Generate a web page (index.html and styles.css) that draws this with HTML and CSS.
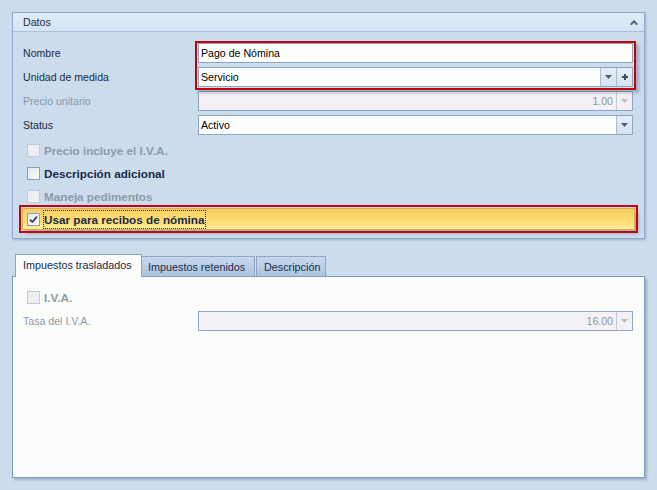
FILE: index.html
```
<!DOCTYPE html>
<html lang="es">
<head>
<meta charset="utf-8">
<title>Datos</title>
<link rel="stylesheet" href="styles.css">
</head>
<body>
<div class="page">
  <section class="group">
    <div class="group-head">
      <span class="group-title">Datos</span>
      <svg class="chev" width="8" height="5" viewBox="0 0 8 5"><path d="M0.8 4.6 L4 1.4 L7.2 4.6" stroke="#4a5d7c" stroke-width="2" fill="none"/></svg>
    </div>
    <div class="group-body">
      <div class="form">
        <div class="lbl">Nombre</div>
        <div class="pair">
          <div class="field"><span class="val">Pago de Nómina</span></div>
          <div class="field">
            <span class="val">Servicio</span>
            <span class="btn"><svg width="7" height="4" viewBox="0 0 7 4"><path d="M0 0h7L3.5 4z" fill="#4d5c72"/></svg></span>
            <span class="btn"><svg width="6" height="6" viewBox="0 0 6 6"><path d="M2 0h2v2h2v2H4v2H2V4H0V2h2z" fill="#3c4c66"/></svg></span>
          </div>
        </div>
        <div class="lbl">Unidad de medida</div>
        <div class="lbl dis">Precio unitario</div>
        <div class="field dis">
          <span class="val right">1.00</span>
          <span class="btn"><svg width="7" height="4" viewBox="0 0 7 4"><path d="M0 0h7L3.5 4z" fill="#b9bec6"/></svg></span>
        </div>
        <div class="lbl">Status</div>
        <div class="field">
          <span class="val">Activo</span>
          <span class="btn"><svg width="7" height="4" viewBox="0 0 7 4"><path d="M0 0h7L3.5 4z" fill="#4d5c72"/></svg></span>
        </div>
      </div>
      <div class="checks">
        <div class="chk dis"><span class="box"></span><span class="ctext">Precio incluye el I.V.A.</span></div>
        <div class="chk"><span class="box"></span><span class="ctext">Descripción adicional</span></div>
        <div class="chk dis"><span class="box"></span><span class="ctext">Maneja pedimentos</span></div>
        <div class="chk hl">
          <span class="box"><svg width="11" height="11" viewBox="0 0 11 11"><path d="M2 5.6 L4.4 8 L9 2.6" stroke="#2b4070" stroke-width="1.8" fill="none"/></svg></span>
          <span class="ctext focus">Usar para recibos de nómina</span>
        </div>
      </div>
    </div>
  </section>

  <div class="tabs">
    <div class="tab active">Impuestos trasladados</div>
    <div class="tab t2">Impuestos retenidos</div>
    <div class="tab t3">Descripción</div>
  </div>
  <div class="panel">
    <div class="chk dis solo"><span class="box"></span><span class="ctext">I.V.A.</span></div>
    <div class="form single">
      <div class="lbl dis">Tasa del I.V.A.</div>
      <div class="field dis">
        <span class="val right">16.00</span>
        <span class="btn"><svg width="7" height="4" viewBox="0 0 7 4"><path d="M0 0h7L3.5 4z" fill="#b9bec6"/></svg></span>
      </div>
    </div>
  </div>
</div>
</body>
</html>
```
FILE: styles.css
```
html, body {
  margin: 0;
  padding: 0;
}
body {
  background: #cbdcec;
  font-family: "Liberation Sans", Arial, sans-serif;
  font-size: 10.6px;
  color: #1e2b40;
  width: 657px;
  height: 490px;
  overflow: hidden;
}
.page {
  padding: 12px 12px 0 12px;
}
.group {
  box-sizing: border-box;
  width: 633px;
  height: 227px;
  border: 1px solid #8ea8cb;
  box-shadow: 1px 1px 2px rgba(70, 95, 130, 0.35);
  background: #cbdcec;
}
.group-head {
  height: 18px;
  border-bottom: 1px solid #a9c1de;
  background: linear-gradient(#dfebf7, #d5e5f4);
  display: flex;
  align-items: center;
  justify-content: space-between;
  padding: 0 6px 0 10px;
}
.group-title {
  color: #1e2b40;
}
.chev {
  display: block;
}
.group-body {
  padding: 11px 11px 0 10px;
}
.form {
  display: grid;
  grid-template-columns: 175px 435px;
  grid-auto-rows: 20px;
  row-gap: 4px;
}
.lbl {
  display: flex;
  align-items: center;
  color: #1e2b40;
}
.lbl.dis {
  color: #8b98aa;
}
.pair {
  grid-row: span 2;
  display: flex;
  flex-direction: column;
  gap: 4px;
  position: relative;
}
.pair::after {
  content: "";
  position: absolute;
  top: -2px;
  left: -3px;
  right: -3px;
  bottom: -3px;
  border: 2px solid #c8000a;
  box-shadow: 3px 3px 3px rgba(70, 85, 110, 0.35);
  pointer-events: none;
}
.field {
  box-sizing: border-box;
  height: 20px;
  border: 1px solid #8ea6c6;
  background: #fdfffd;
  display: flex;
  align-items: stretch;
  color: #000;
}
.field.dis {
  background: #f3f1f5;
  color: #8b98aa;
}
.val {
  flex: 1;
  display: flex;
  align-items: center;
  padding-left: 2px;
}
.val.right {
  justify-content: flex-end;
  padding-right: 3px;
}
.btn {
  width: 15px;
  border-left: 1px solid #a8bcd6;
  background: linear-gradient(#e6eef8, #d4e2f1);
  display: flex;
  align-items: center;
  justify-content: center;
}
.btn svg {
  display: block;
}
.field.dis .btn {
  background: #f3f1f5;
  border-left-color: #c3ccd9;
}
.checks {
  margin-top: 4px;
}
.chk {
  height: 23px;
  display: flex;
  align-items: center;
  padding-left: 4px;
  font-weight: bold;
  font-size: 11.7px;
  color: #1a2b4a;
}
.chk.dis {
  color: #8e9aab;
}
.box {
  box-sizing: border-box;
  width: 13px;
  height: 13px;
  border: 1px solid #8c9db5;
  background: linear-gradient(135deg, #dfe5ec, #ffffff);
  margin-right: 4px;
  display: flex;
  align-items: center;
  justify-content: center;
  flex: none;
}
.chk.dis .box {
  border-color: #c5cbd4;
  background: #eceef1;
}
.chk.hl {
  box-sizing: border-box;
  height: 22px;
  width: 613px;
  margin-left: -1px;
  padding-left: 4px;
  border: 1px solid #d3ae5a;
  background: linear-gradient(#f3cd66, #fad768 30%, #fde07a 70%, #fff09a);
  outline: 2px solid #c8000a;
  outline-offset: 1px;
  box-shadow: 4px 4px 3px rgba(70, 85, 110, 0.3);
}
.chk.hl .box {
  margin-right: 3px;
  background: linear-gradient(135deg, #dfe5ec, #ffffff);
}
.focus {
  border: 1px dotted #22325a;
  height: 17px;
  display: flex;
  align-items: center;
  padding: 0 1px 0 0;
}
.tabs {
  margin-top: 15px;
  padding-left: 3px;
  display: flex;
  align-items: flex-end;
  height: 22px;
}
.tab {
  box-sizing: border-box;
  border: 1px solid #8ea6c6;
  border-bottom: none;
  display: flex;
  align-items: center;
  padding-left: 7px;
  white-space: nowrap;
  overflow: hidden;
  color: #1c2c4c;
  font-size: 10.8px;
}
.tab.active {
  width: 127px;
  height: 23px;
  margin-bottom: -1px;
  background: #fbfdfb;
  position: relative;
  z-index: 2;
  padding-bottom: 2px;
  color: #1a2848;
}
.tab.t2 {
  width: 113px;
  height: 20px;
  border-left: none;
  padding-left: 6px;
  background: linear-gradient(#c6d8ec, #adc4df);
}
.tab.t3 {
  width: 70px;
  height: 20px;
  margin-left: 1px;
  background: linear-gradient(#c6d8ec, #adc4df);
}
.panel {
  box-sizing: border-box;
  width: 633px;
  height: 202px;
  border: 1px solid #7f9bc0;
  background: #fbfdfb;
  box-shadow: 2px 2px 2px rgba(80, 100, 135, 0.35);
  padding: 9px 11px 0 10px;
  position: relative;
  z-index: 1;
}
.chk.solo {
  margin-bottom: 2px;
}
```
